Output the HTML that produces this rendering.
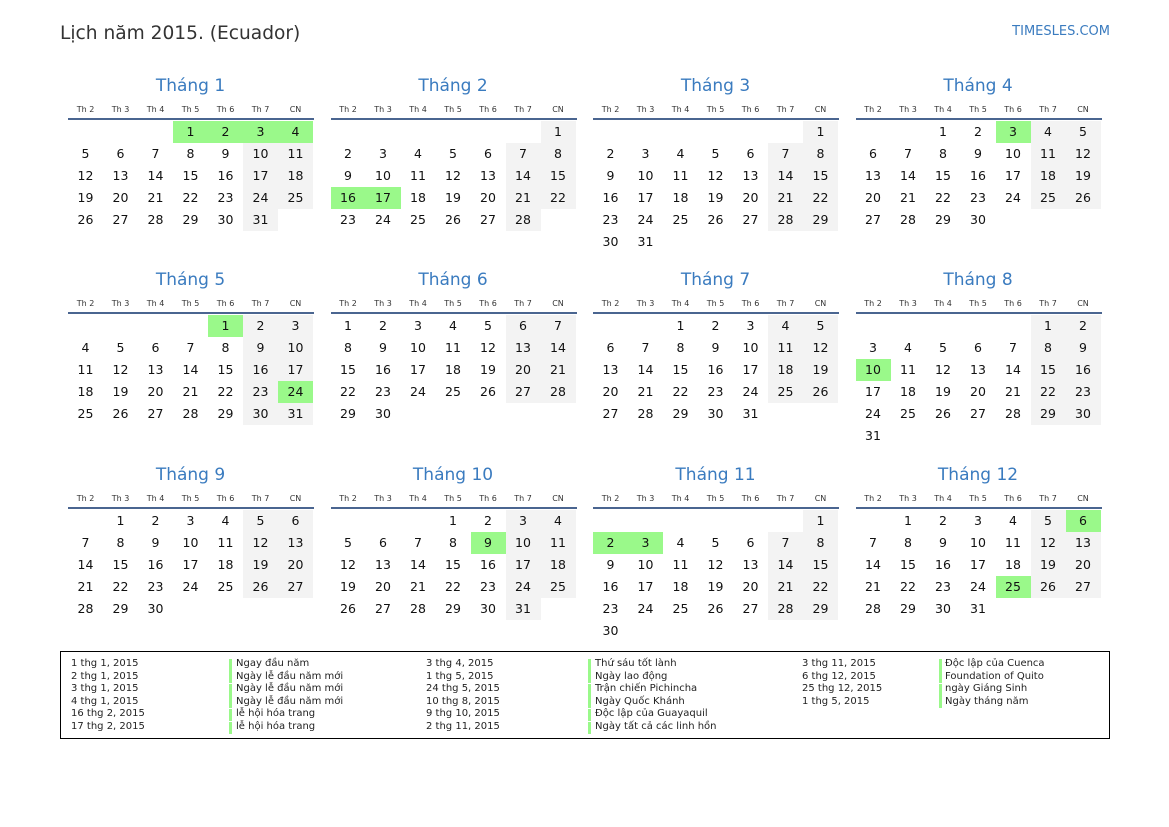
<!DOCTYPE html>
<html><head><meta charset="utf-8">
<style>
body{margin:0;width:1169px;height:827px;background:#fff;position:relative;font-family:"DejaVu Sans","Liberation Sans",sans-serif;overflow:hidden}
.a{position:absolute;white-space:nowrap}
.t{font-size:18.6px;color:#333;left:60px;top:23px}
.logo{font-size:13px;color:#3a7bbf;right:59px;top:24px}
.mt{font-size:17px;color:#3a7bbf;width:245px;text-align:center}
.hd{font-size:8px;color:#333;width:35px;text-align:center}
.ln{height:2px;background:#4a6590;width:246px}
.c{width:35px;height:22px;line-height:22px;text-align:center;font-size:12.5px;color:#111}
.w{background:#f3f3f3}.h{background:#9af98a}
.lg{left:60px;top:651px;width:1048px;height:86px;border:1px solid #000}
.l{font-size:10px;color:#222;line-height:12.6px}
.bar{width:3px;height:12px;background:#9af98a}
</style></head><body>
<div class="a t">Lịch năm 2015. (Ecuador)</div>
<div class="a logo">TIMESLES.COM</div>
<div id="cal"></div>
<div class="a lg"></div>
<div id="leg"></div>
<script>
var hol={"0-1":1,"0-2":1,"0-3":1,"0-4":1,"1-16":1,"1-17":1,"3-3":1,"4-1":1,"4-24":1,"7-10":1,"9-9":1,"10-2":1,"10-3":1,"11-6":1,"11-25":1};
var hd=["Th 2","Th 3","Th 4","Th 5","Th 6","Th 7","CN"];
var xs=[68,330.5,593,855.5],ys=[70,264,459];
var h="";
for(var m=0;m<12;m++){
 var x=xs[m%4],y=ys[Math.floor(m/4)];
 h+='<div class="a mt" style="left:'+x+'px;top:'+(y+6)+'px">Tháng '+(m+1)+'</div>';
 for(var i=0;i<7;i++)h+='<div class="a hd" style="left:'+(x+i*35)+'px;top:'+(y+35)+'px">'+hd[i]+'</div>';
 h+='<div class="a ln" style="left:'+x+'px;top:'+(y+48)+'px"></div>';
 var s=(new Date(2015,m,1).getDay()+6)%7,n=new Date(2015,m+1,0).getDate();
 for(var d=1;d<=n;d++){var p=s+d-1,col=p%7,row=Math.floor(p/7);
  var cls="c"+(hol[m+"-"+d]?" h":(col>=5?" w":""));
  h+='<div class="a '+cls+'" style="left:'+(x+col*35)+'px;top:'+(y+51+row*22)+'px">'+d+'</div>';}
}
document.getElementById("cal").innerHTML=h;
var L=[[71,229,236,[["1 thg 1, 2015","Ngay đầu năm"],["2 thg 1, 2015","Ngày lễ đầu năm mới"],["3 thg 1, 2015","Ngày lễ đầu năm mới"],["4 thg 1, 2015","Ngày lễ đầu năm mới"],["16 thg 2, 2015","lễ hội hóa trang"],["17 thg 2, 2015","lễ hội hóa trang"]]],
[426,588,595,[["3 thg 4, 2015","Thứ sáu tốt lành"],["1 thg 5, 2015","Ngày lao động"],["24 thg 5, 2015","Trận chiến Pichincha"],["10 thg 8, 2015","Ngày Quốc Khánh"],["9 thg 10, 2015","Độc lập của Guayaquil"],["2 thg 11, 2015","Ngày tất cả các linh hồn"]]],
[802,939,945,[["3 thg 11, 2015","Độc lập của Cuenca"],["6 thg 12, 2015","Foundation of Quito"],["25 thg 12, 2015","ngày Giáng Sinh"],["1 thg 5, 2015","Ngày tháng năm"]]]];
var g="";
L.forEach(function(c){c[3].forEach(function(r,i){var t=658+i*12.6;
 g+='<div class="a l" style="left:'+c[0]+'px;top:'+t+'px">'+r[0]+'</div><div class="a bar" style="left:'+c[1]+'px;top:'+(t+0.5)+'px"></div><div class="a l" style="left:'+c[2]+'px;top:'+t+'px">'+r[1]+'</div>';});});
document.getElementById("leg").innerHTML=g;
</script>
</body></html>
